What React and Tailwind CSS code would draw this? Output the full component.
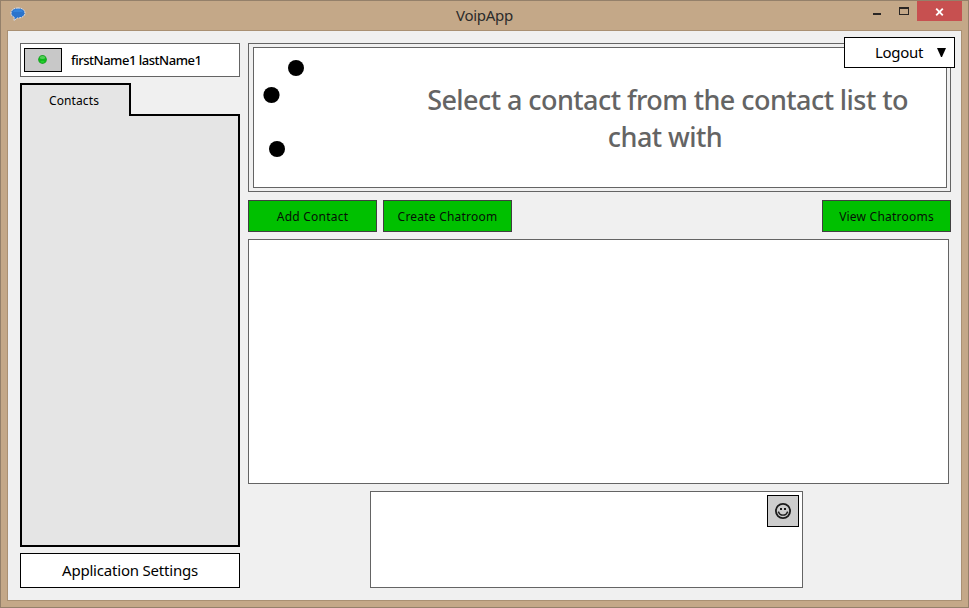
import React from "react";

function TitleBar() {
  return (
    <header className="flex h-[29px] w-full shrink-0 items-start">
      <div className="flex w-[140px] pl-[9px] pt-[6px]">
        <svg width="16" height="15" viewBox="0 0 16 15">
          <path d="M8 1C3.8 1 1 3.2 1 6c0 2 1.300 3.600 3.300 4.400L4 13.600 7.200 11H8c4.200 0 7-2.200 7-5S12.200 1 8 1z" fill="#2b74cc" stroke="#e8e4e2" strokeWidth="1" strokeDasharray="2 .7" />
          <path d="M3 5c.7-2 2.600-3 5-3s4.200 1 5 3z" fill="#3484dc" />
        </svg>
      </div>
      <h1 className="flex-1 pt-[4px] text-center text-[15px] leading-5 text-[#2b2b2b]">
        <span className="tracking-[-0.300px]">VoipApp</span>
      </h1>
      <div className="flex w-[140px] justify-end pr-[6px]">
        <svg width="44" height="20" viewBox="0 0 44 20" shapeRendering="crispEdges">
          <rect x="0" y="12" width="8" height="2" fill="#2a2624" />
          <path d="M26 6h10v8H26zM27 8v5h8V8z" fill="#2a2624" fillRule="evenodd" />
        </svg>
        <div className="flex h-5 w-[45px] items-center justify-center bg-[#c75050]">
          <svg width="9" height="8" viewBox="0 0 9 8" className="mt-[1px]">
            <path d="M1.200 .7l6.600 6.600M7.800 .7L1.200 7.300" stroke="#fff" strokeWidth="1.900" />
          </svg>
        </div>
      </div>
    </header>
  );
}

function Sidebar() {
  return (
    <aside className="flex w-[220px] flex-col">
      <div className="flex h-[34px] items-center border border-[#646464] bg-white pl-[3px]">
        <button className="flex h-6 w-[38px] items-center justify-center border border-black bg-[#c8c8c8] pb-[1px] pr-[1px]">
          <svg width="9" height="9" viewBox="0 0 9 9">
            <circle cx="4.500" cy="4.500" r="4.400" fill="#23a32c" />
            <circle cx="4.500" cy="4.500" r="3.500" fill="#0fb81c" />
            <ellipse cx="4.500" cy="2.600" rx="2.700" ry="1.500" fill="#52cf57" />
            <ellipse cx="4.500" cy="6.800" rx="2" ry="1" fill="#25d02f" />
          </svg>
        </button>
        <span className="ml-[9px] whitespace-nowrap pt-[2px] text-[13px] font-medium tracking-[-0.480px] text-black">firstName1 lastName1</span>
      </div>
      <div className="z-10 mt-[6px] flex h-[33px] w-[111px] items-center justify-center border-2 border-b-0 border-black bg-[#e5e5e5] text-[12px] text-black">
        <span className="mr-[3px] tracking-[0.100px]">Contacts</span>
      </div>
      <div className="-mt-[2px] h-[433px] border-2 border-black bg-[#e5e5e5]" />
      <button className="mt-[6px] flex h-[35px] items-center justify-center border border-black bg-white text-[15px] text-black">
        <span className="tracking-[-0.200px]">Application Settings</span>
      </button>
    </aside>
  );
}

function GreenButton({ children }) {
  return (
    <button className="flex h-8 w-[129px] items-center justify-center whitespace-nowrap border border-[#404040] bg-[#00c000] pt-[2px] text-[12px] text-[#061006]">
      <span className="tracking-[0.220px]">{children}</span>
    </button>
  );
}

function ContactPanel() {
  return (
    <section className="h-[149px] border border-[#646464] bg-[#f0f0f0] pb-[3px] pl-[4px] pr-[3px] pt-[3px]">
      <div className="flex h-[141px] border border-[#646464] bg-white">
        <svg width="130" height="139" viewBox="254 48 130 139" className="shrink-0">
          <circle cx="296" cy="68" r="8" />
          <circle cx="271.5" cy="95" r="8.100" />
          <circle cx="277" cy="149" r="8" />
        </svg>
        <h2 className="flex-1 pt-[33px] text-center text-[27px] font-medium leading-[37px] tracking-[-0.560px] text-[#646464]">
          <span className="block whitespace-nowrap pl-[5px]">Select a contact from the contact list to</span>
          <span className="block pl-0">chat with</span>
        </h2>
      </div>
    </section>
  );
}

function Main() {
  return (
    <main className="ml-2 flex w-[703px] flex-col">
      <ContactPanel />
      <div className="mt-2 flex gap-[6px]">
        <GreenButton>Add Contact</GreenButton>
        <GreenButton>Create Chatroom</GreenButton>
        <div className="ml-auto">
          <GreenButton>View Chatrooms</GreenButton>
        </div>
      </div>
      <div className="mt-[7px] h-[245px] w-[701px] border border-[#646464] bg-white" />
      <div className="ml-[122px] mt-[7px] flex h-[97px] w-[433px] justify-end border border-[#646464] bg-white p-[3px]">
        <button className="flex size-8 items-center justify-center border border-black bg-[#cdcdcd]">
          <svg width="16" height="16" viewBox="0 0 16 16" fill="none" stroke="#1a1a1a">
            <circle cx="8" cy="8" r="7.100" strokeWidth="1.800" />
            <path d="M3.500 9c.8 2.300 2.500 3.200 4.500 3.200s3.700-.9 4.500-3.200" strokeWidth="1.300" />
            <path d="M2.800 9.300l1.300-.5M13.200 9.300l-1.300-.5" strokeWidth="1" />
            <path d="M5 6h2M9 6h2" strokeWidth="2" />
          </svg>
        </button>
      </div>
    </main>
  );
}

export default function App() {
  return (
    <div className="relative flex h-[608px] w-[969px] flex-col overflow-hidden border border-[#94806a] bg-[#c4a888] font-['Noto_Sans','Open_Sans',sans-serif]">
      <TitleBar />
      <div className="ml-[6px] flex h-[571px] w-[955px] border border-[#a99073] bg-[#f0f0f0] pl-[12px] pt-[12px]">
        <Sidebar />
        <Main />
      </div>
      <button className="absolute left-[843px] top-[36px] flex h-[31px] w-[111px] items-center border border-black bg-white pl-[30px] text-[15px] text-black">
        <span className="w-[62px] text-left tracking-[-0.300px]">Logout</span>
        <svg width="9" height="9" viewBox="0 0 9 9">
          <path d="M0 0h9L5 9H4z" />
        </svg>
      </button>
    </div>
  );
}
